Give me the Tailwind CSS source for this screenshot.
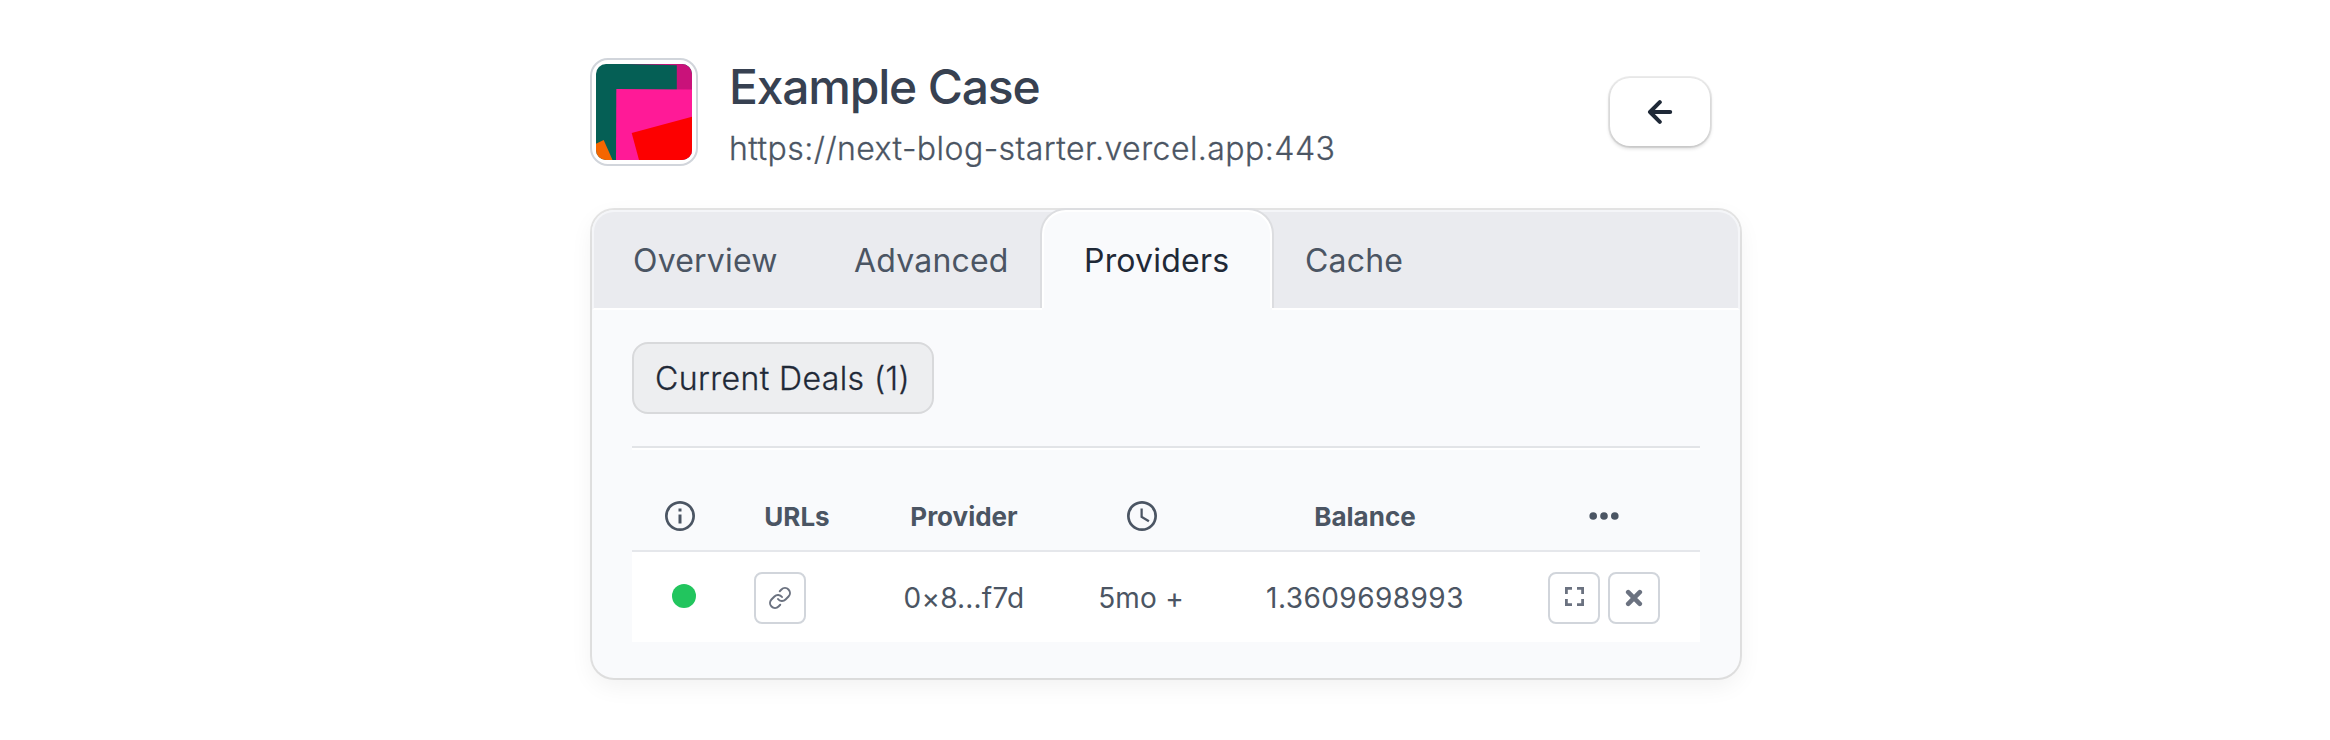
<!DOCTYPE html>
<html lang="en">
<head>
<meta charset="utf-8">
<title>Example Case</title>
<script src="https://cdn.jsdelivr.net/npm/@tailwindcss/browser@4"></script>
</head>
<body class="bg-white font-['Inter',sans-serif] text-[#4b5563]">
<main class="mx-auto w-[1152px] translate-x-px pt-[58px] h-[740px] overflow-visible">
  <header class="flex h-[108px] items-start">
    <div class="size-[108px] shrink-0 rounded-[18px] border-2 border-[#d1d5db] p-1">
      <svg class="size-24 rounded-[10px]" viewBox="0 0 96 96">
        <rect width="96" height="96" fill="#055f55"/>
        <path d="M30 0H96V26H80.8V1.2Z" fill="#c9127a"/>
        <path d="M20.3 25L96 25.6V96H20Z" fill="#ff1a97"/>
        <path d="M35.7 69L96 52.7V96H43Z" fill="#fd0000"/>
        <path d="M0 79.7L7.7 76L16.5 96H0Z" fill="#f56600"/>
      </svg>
    </div>
    <div class="ml-[31px] flex-1">
      <h1 class="text-[48px] leading-[57px] font-medium tracking-[-1.2px] text-[#374151]">Example Case</h1>
      <p class="mt-[6px] text-[32px] leading-[56px] font-light tracking-[0.46px] [-webkit-text-stroke:0.3px]">https://next-blog-starter.vercel.app:443</p>
    </div>
    <button class="mt-5 mr-8 flex h-[68px] w-[100px] items-center justify-center rounded-[20px] bg-white shadow-[0_0_0_2px_rgba(0,0,0,0.07),0_2px_4px_rgba(0,0,0,0.2)]">
      <svg class="h-6 w-[26px]" viewBox="0 0 26 24" fill="none" stroke="#1f2937" stroke-width="4" stroke-linecap="round" stroke-linejoin="round"><path d="M12.8 2.2L3 12L12.8 21.8M3 12H23.2"/></svg>
    </button>
  </header>

  <section class="mx-0.5 mt-11 h-[468px] rounded-[22px] bg-[#f9fafc] shadow-[0_0_0_2px_rgba(0,0,0,0.1),0_8px_24px_rgba(0,0,0,0.06)]">
    <nav class="flex h-[100px] rounded-t-[22px] border-2 border-[#f4f5f8] border-b-white bg-[#eaebef] text-[32px] leading-[97px] tracking-[0.2px]">
      <span class="w-[220px] pl-[39px]">Overview</span>
      <span class="w-[228px] pl-[40px]">Advanced</span>
      <div class="-mt-0.5 -mb-0.5 flex h-[100px] w-[230px] flex-col">
        <span class="block h-[98px] rounded-t-[24px] border-2 border-b-0 border-white bg-[#f9fafc] pl-[40px] text-[#1f2937] shadow-[0_0_0_2px_#dcdde0] [clip-path:inset(-2px_-2px_0_-2px)]">Providers</span>
        <span class="h-0.5 bg-[#f9fafc]"></span>
      </div>
      <span class="pl-[33px]">Cache</span>
    </nav>
    <div class="px-10 pt-8">
      <button class="flex h-[72px] w-[302px] items-center rounded-2xl border-2 border-[#d8d9db] bg-[#edeef0] pt-px pl-[21px] text-[32px] font-light tracking-[0.4px] text-[#1f2937] [-webkit-text-stroke:0.3px]">Current Deals (1)</button>
      <div class="mt-8 h-1 border-t-2 border-b-2 border-t-[#e2e4e7] border-b-white"></div>
      <div class="mt-8 grid h-[70px] grid-cols-[96px_138px_196px_160px_286px_192px] items-center justify-items-center border-b-2 border-[#e5e7eb] text-[26px] font-bold">
        <svg class="size-9" viewBox="0 0 24 24" fill="currentColor"><path d="M11 7h2v2h-2zm0 4h2v6h-2zm1-9C6.48 2 2 6.48 2 12s4.48 10 10 10 10-4.48 10-10S17.52 2 12 2zm0 18.200a8.200 8.200 0 1 1 0-16.400 8.200 8.200 0 0 1 0 16.400z"/></svg>
        <span>URLs</span>
        <span>Provider</span>
        <svg class="size-9" viewBox="0 0 24 24" fill="currentColor"><path d="M12 2C6.480 2 2 6.480 2 12s4.480 10 10 10 10-4.480 10-10S17.520 2 12 2zm0 18.200a8.200 8.200 0 1 1 0-16.400 8.200 8.200 0 0 1 0 16.400zM12.500 7H11v6l5.200 3.100.8-1.300-4.500-2.600z"/></svg>
        <span>Balance</span>
        <svg class="h-2 w-[30px]" viewBox="0 0 30 8" fill="currentColor"><circle cx="4.200" cy="4" r="3.800"/><circle cx="15" cy="4" r="3.800"/><circle cx="25.800" cy="4" r="3.800"/></svg>
      </div>
      <div class="grid h-[90px] grid-cols-[96px_138px_196px_160px_286px_192px] items-center justify-items-center bg-white pt-0.5 text-[28px] tracking-[0.2px]">
        <span class="mb-1 ml-2 size-6 rounded-full bg-[#22c55e]"></span>
        <button class="mr-[34px] flex size-[52px] items-center justify-center rounded-lg border-2 border-[#d1d5db]">
          <svg class="size-6" viewBox="0 0 24 24" fill="none" stroke="#6b7280" stroke-width="2" stroke-linecap="round" stroke-linejoin="round"><path d="M10 13a5 5 0 0 0 7.540.540l3-3a5 5 0 0 0-7.070-7.070l-1.720 1.710"/><path d="M14 11a5 5 0 0 0-7.540-.540l-3 3a5 5 0 0 0 7.070 7.070l1.710-1.710"/></svg>
        </button>
        <span>0×8...f7d</span>
        <span class="mr-0.5">5mo +</span>
        <span class="tracking-[0.45px]">1.3609698993</span>
        <div class="flex gap-2">
          <button class="flex size-[52px] items-start justify-center rounded-lg border-2 border-[#d1d5db] pt-[13px]">
            <svg class="size-[19px]" viewBox="0 0 19 19" fill="none" stroke="#6b7280" stroke-width="2.800"><path d="M1.400 7V1.400H7M12 1.400H17.600V7M17.600 12V17.600H12M7 17.600H1.400V12"/></svg>
          </button>
          <button class="flex size-[52px] items-center justify-center rounded-lg border-2 border-[#d1d5db]">
            <svg class="size-[18px]" viewBox="0 0 18 18" fill="none" stroke="#6b7280" stroke-width="4.600" stroke-linecap="round"><path d="M3.200 3.200L14.800 14.800M14.800 3.200L3.200 14.800"/></svg>
          </button>
        </div>
      </div>
    </div>
  </section>
</main>
</body>
</html>
